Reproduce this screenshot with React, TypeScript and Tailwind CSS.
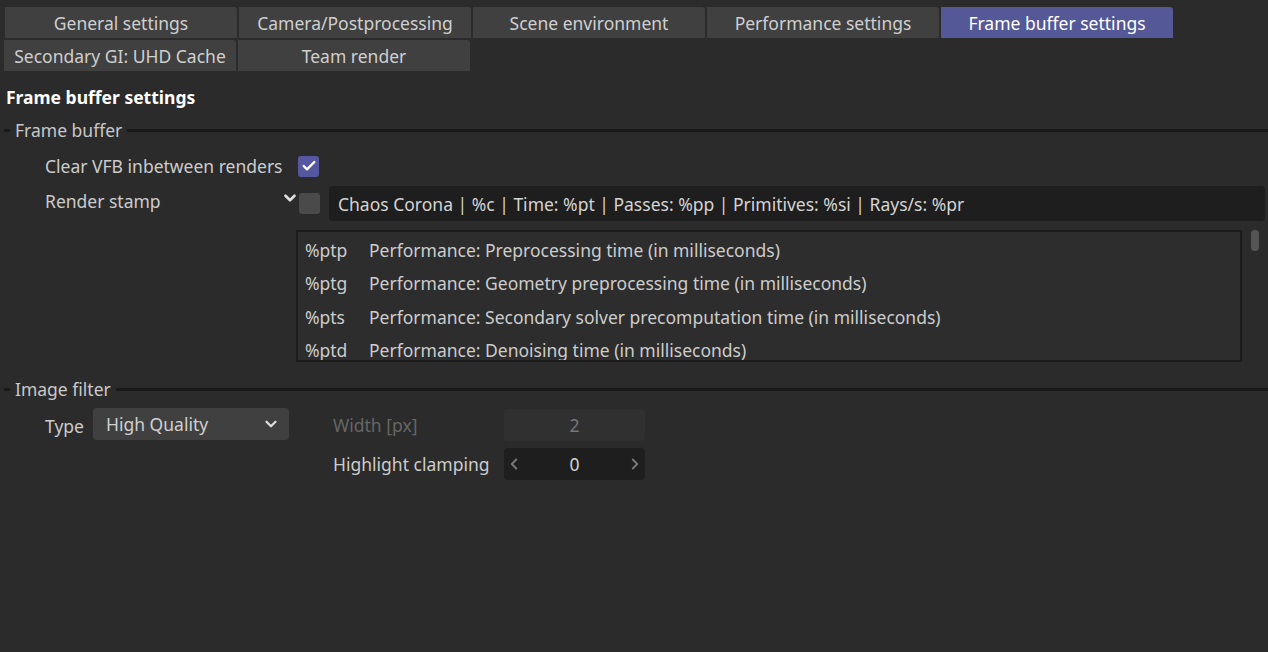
import { Check, ChevronDown, ChevronLeft, ChevronRight } from 'lucide-react';

const tabsTop = ['General settings', 'Camera/Postprocessing', 'Scene environment', 'Performance settings', 'Frame buffer settings'];
const tabsBottom = ['Secondary GI: UHD Cache', 'Team render'];

const stampRows = [
    ['%ptp', 'Performance: Preprocessing time (in milliseconds)'],
    ['%ptg', 'Performance: Geometry preprocessing time (in milliseconds)'],
    ['%pts', 'Performance: Secondary solver precomputation time (in milliseconds)'],
    ['%ptd', 'Performance: Denoising time (in milliseconds)'],
];

function Tab({ label, active }: { label: string; active?: boolean }) {
    return (
        <div
            className={`w-[232px] h-[31px] flex items-center justify-center rounded-tr-[3px] pt-[1px] ${
                active ? 'bg-[#555896] text-white' : 'bg-[#404040] text-[#cfcfcf]'
            }`}
        >
            {label}
        </div>
    );
}

function GroupHeader({ title }: { title: string }) {
    return (
        <div className="flex items-center h-[24px]">
            <div className="w-[6px] h-[3px] bg-[#1a1a1a] ml-[4px]" />
            <span className="px-[5px] text-[#c8c8c8]">{title}</span>
            <div className="flex-1 h-[3px] bg-[#1a1a1a]" />
        </div>
    );
}

export default function App() {
    return (
        <div
            className="w-[1268px] h-[652px] bg-[#2b2b2b] text-[17.5px] leading-[24px] text-[#cccccc] overflow-hidden"
            style={{ fontFamily: '"Noto Sans", "Open Sans", sans-serif' }}
        >
            <div className="pt-[7px] pl-[5px] flex flex-col gap-[2px]">
                <div className="flex gap-[2px]">
                    {tabsTop.map((t) => (
                        <Tab key={t} label={t} active={t === 'Frame buffer settings'} />
                    ))}
                </div>
                <div className="flex gap-[2px] -ml-[1px]">
                    {tabsBottom.map((t) => (
                        <Tab key={t} label={t} />
                    ))}
                </div>
            </div>

            <div className="pl-[6px] pt-[14px] font-bold text-white">Frame buffer settings</div>

            <div className="mt-[9px]">
                <GroupHeader title="Frame buffer" />
            </div>

            <div className="pl-[45px] mt-[12px] flex items-center h-[24px]">
                <span className="w-[253px]">Clear VFB inbetween renders</span>
                <div className="w-[21px] h-[21px] rounded-[3px] bg-[#5558a0] flex items-center justify-center">
                    <Check size={16} strokeWidth={3.5} className="text-white" />
                </div>
            </div>

            <div className="pl-[45px] mt-[8px] flex items-start">
                <span className="w-[236px] pt-[3px]">Render stamp</span>
                <ChevronDown size={18} strokeWidth={3.5} className="text-[#e0e0e0] mt-[3px]" />
                <div className="w-[21px] h-[21px] rounded-[3px] bg-[#4a4a4a] mt-[7px]" />
                <div className="ml-[9px] flex-1 mr-[3px] h-[35px] rounded-[4px] bg-[#1e1e1e] flex items-center pl-[9px] text-[#d4d4d4]">
                    Chaos Corona | %c | Time: %pt | Passes: %pp | Primitives: %si | Rays/s: %pr
                </div>
            </div>

            <div className="flex mt-[9px] pl-[296px]">
                <div className="w-[946px] h-[132px] border-2 border-[#1c1c1c] bg-[#2d2d2d] overflow-hidden pt-[1px]">
                    {stampRows.map(([code, desc]) => (
                        <div key={code} className="flex h-[33.5px] items-center">
                            <span className="w-[71px] pl-[7px]">{code}</span>
                            <span>{desc}</span>
                        </div>
                    ))}
                </div>
                <div className="ml-[9px] w-[8px] h-[21px] rounded-full bg-[#555555]" />
            </div>

            <div className="mt-[15px]">
                <GroupHeader title="Image filter" />
            </div>

            <div className="flex mt-[5px]">
                <div className="pl-[45px] flex items-start h-[32px] pt-[2px]">
                    <span className="w-[48px] pt-[6px]">Type</span>
                    <div className="w-[196px] h-[32px] rounded-[4px] bg-[#404040] flex items-center justify-between pl-[13px] pr-[9px] text-[#d0d0d0]">
                        <span>High Quality</span>
                        <ChevronDown size={18} strokeWidth={3} className="text-[#dddddd]" />
                    </div>
                </div>
                <div className="ml-[44px] flex flex-col gap-[7px] mt-[3px]">
                    <div className="flex items-center h-[32px]">
                        <span className="w-[171px] text-[#666666]">Width [px]</span>
                        <div className="w-[141px] h-[32px] rounded-[4px] bg-[#303030] flex items-center justify-center text-[#777777]">
                            2
                        </div>
                    </div>
                    <div className="flex items-center h-[32px]">
                        <span className="w-[171px]">Highlight clamping</span>
                        <div className="w-[141px] h-[32px] rounded-[4px] bg-[#1e1e1e] flex items-center justify-between px-[1px] text-[#d4d4d4]">
                            <ChevronLeft size={18} strokeWidth={2.5} className="text-[#777777]" />
                            <span>0</span>
                            <ChevronRight size={18} strokeWidth={2.5} className="text-[#777777]" />
                        </div>
                    </div>
                </div>
            </div>
        </div>
    );
}
